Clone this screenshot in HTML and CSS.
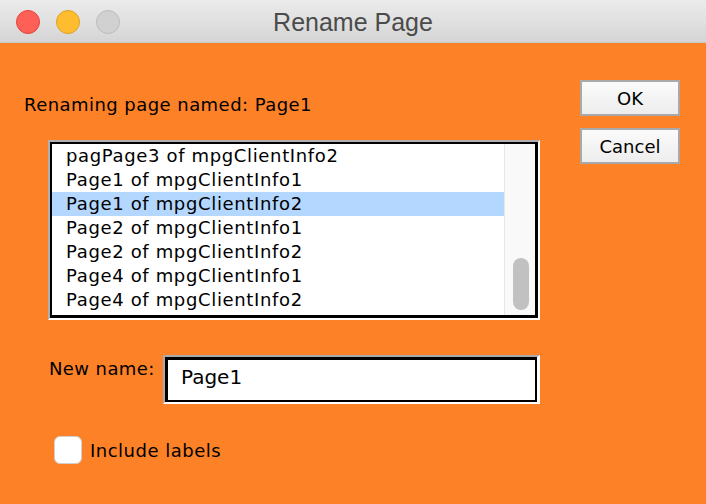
FILE: index.html
```html
<!DOCTYPE html>
<html>
<head>
<meta charset="utf-8">
<link rel="stylesheet" href="styles.css">
</head>
<body>
<div class="window">
  <div class="titlebar">
    <div class="lights">
      <span class="light red"></span>
      <span class="light yellow"></span>
      <span class="light gray"></span>
    </div>
    <div class="title">Rename Page</div>
  </div>
  <div class="content">
    <div class="main">
      <div class="prompt">Renaming page named: Page1</div>
      <div class="listbox">
        <div class="listframe">
          <div class="rows">
            <div class="row">pagPage3 of mpgClientInfo2</div>
            <div class="row">Page1 of mpgClientInfo1</div>
            <div class="row selected">Page1 of mpgClientInfo2</div>
            <div class="row">Page2 of mpgClientInfo1</div>
            <div class="row">Page2 of mpgClientInfo2</div>
            <div class="row">Page4 of mpgClientInfo1</div>
            <div class="row">Page4 of mpgClientInfo2</div>
          </div>
          <div class="scrollbar"><div class="thumb"></div></div>
        </div>
      </div>
      <div class="namerow">
        <div class="namelabel">New name:</div>
        <div class="field"><div class="fieldinner">Page1</div></div>
      </div>
      <div class="checkrow">
        <span class="checkbox"></span>
        <span class="checklabel">Include labels</span>
      </div>
    </div>
    <div class="buttons">
      <div class="btn">OK</div>
      <div class="btn">Cancel</div>
    </div>
  </div>
</div>
</body>
</html>
```
FILE: styles.css
```css
html, body {
  margin: 0;
  padding: 0;
}
body {
  width: 706px;
  height: 504px;
  overflow: hidden;
  font-family: "DejaVu Sans", "Noto Sans", sans-serif;
  color: #000;
}
.window {
  width: 706px;
  height: 504px;
  background: #fd8126;
  display: flex;
  flex-direction: column;
}
.titlebar {
  height: 42px;
  flex: none;
  background: linear-gradient(#ebebeb, #d5d5d5);
  border-bottom: 1px solid #c8c8c8;
  position: relative;
  display: flex;
  align-items: center;
  justify-content: center;
}
.lights {
  position: absolute;
  left: 16px;
  top: 10px;
  display: flex;
  gap: 16px;
}
.light {
  width: 24px;
  height: 24px;
  border-radius: 50%;
  box-sizing: border-box;
}
.red { background: #fe5f57; border: 1px solid #e0443e; }
.yellow { background: #febc2e; border: 1px solid #dea123; }
.gray { background: #d1d1d1; border: 1px solid #bcbcbc; }
.title {
  font-family: "Liberation Sans", Arial, sans-serif;
  font-size: 25px;
  color: #4b4b4b;
  margin-top: 3px;
}
.content {
  display: flex;
  padding: 37px 0 0 23px;
}
.main {
  width: 557px;
  display: flex;
  flex-direction: column;
}
.prompt {
  font-size: 18px;
  letter-spacing: 0.45px;
  margin-top: 14px;
  margin-left: 1px;
  line-height: 22px;
}
.listbox {
  margin: 24px 0 0 25px;
  width: 492px;
  height: 180px;
  box-sizing: border-box;
  border-top: 2px solid #b0b0b0;
  border-left: 2px solid #b0b0b0;
  border-right: 2px solid #fff;
  border-bottom: 2px solid #fff;
}
.listframe {
  height: 100%;
  box-sizing: border-box;
  border: 2px solid #000;
  border-right-width: 3px;
  border-bottom-width: 3px;
  background: #fff;
  display: flex;
}
.rows {
  flex: 1;
}
.row {
  height: 24px;
  line-height: 24px;
  padding-left: 14px;
  font-size: 18px;
  letter-spacing: 0.65px;
  white-space: nowrap;
}
.row.selected {
  background: #b3d7ff;
}
.scrollbar {
  width: 30px;
  flex: none;
  background: #f9f9f9;
  border-left: 1px solid #e6e6e6;
  position: relative;
}
.thumb {
  position: absolute;
  left: 8px;
  top: 114px;
  width: 16px;
  height: 52px;
  border-radius: 8px;
  background: #c1c1c1;
}
.namerow {
  display: flex;
  margin-top: 35px;
  margin-left: 25px;
}
.namelabel {
  font-size: 18px;
  letter-spacing: 0.4px;
  line-height: 22px;
  width: 114px;
  padding-left: 1px;
  padding-top: 3px;
}
.field {
  width: 377px;
  height: 49px;
  box-sizing: border-box;
  border-top: 2px solid #a9a9a9;
  border-left: 2px solid #a9a9a9;
  border-right: 3px solid #fff;
  border-bottom: 2px solid #fff;
}
.fieldinner {
  height: 100%;
  box-sizing: border-box;
  border: 3px solid #000;
  border-bottom-width: 2px;
  border-right-width: 2px;
  background: #fff;
  font-size: 20px;
  line-height: normal;
  padding-left: 13px;
  padding-top: 5px;
}
.checkrow {
  display: flex;
  align-items: center;
  margin-top: 32px;
  margin-left: 31px;
}
.checkbox {
  width: 28px;
  height: 28px;
  box-sizing: border-box;
  border-radius: 6px;
  background: #fff;
  border: 1px solid #cfcfcf;
}
.checklabel {
  font-size: 18px;
  letter-spacing: 0.5px;
  margin-left: 8px;
}
.buttons {
  display: flex;
  flex-direction: column;
  gap: 12px;
}
.btn {
  width: 100px;
  height: 36px;
  box-sizing: border-box;
  border: 2px solid #a9a9a9;
  background: linear-gradient(#fbfbfb, #ededed);
  font-size: 18px;
  display: flex;
  align-items: center;
  justify-content: center;
}
```
